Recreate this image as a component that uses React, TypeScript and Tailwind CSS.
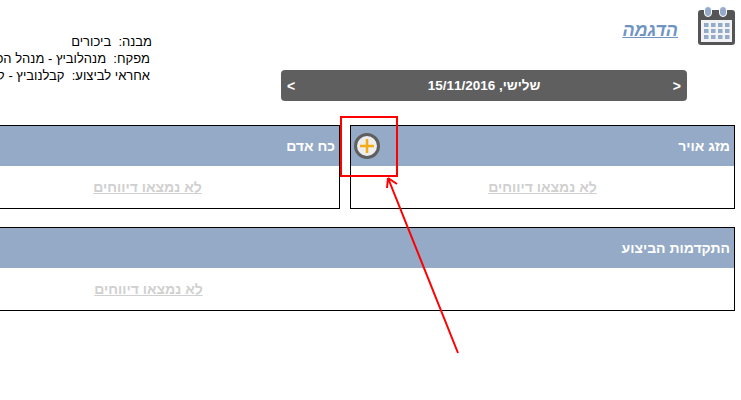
const noReports = "לא נמצאו דיווחים";

function CalendarIcon() {
  return (
    <svg width="37" height="40" viewBox="0 0 37 40" className="block">
      <rect x="0" y="4" width="37" height="35" rx="3" fill="#555" />
      <rect x="3" y="14" width="31" height="22" fill="#f1f3f6" />
      {[17, 23, 29].map((y) =>
        [6, 13, 20, 27].map((x) => <rect key={`${x}-${y}`} x={x} y={y} width="4.5" height="4" fill="#94aac6" />)
      )}
      <rect x="6.5" y="0.5" width="7" height="10" rx="3.5" fill="#94aac6" stroke="#fff" />
      <rect x="21.5" y="0.5" width="7" height="10" rx="3.5" fill="#94aac6" stroke="#fff" />
    </svg>
  );
}

function PlusIcon() {
  return (
    <svg width="26" height="26" viewBox="0 0 26 26" className="block">
      <circle cx="13" cy="13" r="11.5" fill="#eeeeee" stroke="#5f5f5f" strokeWidth="3" />
      <path d="M13 6v14M6 13h14" stroke="#f5ac14" strokeWidth="2.5" />
    </svg>
  );
}

function Panel({ title, action, className }: { title: string; action?: boolean; className: string }) {
  return (
    <div className={`border border-black ${className}`}>
      <div className="h-10 bg-[#94aac6] flex items-center justify-between pr-[4px] pl-[3px]">
        <span className="text-white font-bold text-sm">{title}</span>
        {action && <PlusIcon />}
      </div>
      <div className="h-[42px] flex items-center justify-center">
        <a className="text-[#d0d0d0] font-bold text-sm underline">{noReports}</a>
      </div>
    </div>
  );
}

export default function App() {
  return (
    <div
      dir="rtl"
      className="relative w-[741px] h-[400px] overflow-hidden bg-white text-sm text-black font-['Liberation_Sans',Arial,sans-serif]"
    >
      <div className="w-[780px] ml-[-45px] mr-[6px] pt-[6px]">
        <div className="flex h-[119px]">
          <div className="w-[36px] shrink-0">
            <CalendarIcon />
          </div>
          <div className="w-[418px] shrink-0 pr-[12px]">
            <a className="block mt-[10px] pr-[9px] text-[#6f94c4] text-lg font-bold italic underline">הדגמה</a>
            <div className="mt-[26px] h-[31px] w-[406px] rounded bg-[#5f5f5f] text-white font-bold flex items-center justify-between px-[6px]">
              <span>&lt;</span>
              <span className="text-[13.5px]">שלישי, 15/11/2016</span>
              <span>&gt;</span>
            </div>
          </div>
          <div className="mr-[131px] pt-[27px] leading-[17px] whitespace-nowrap text-[13px]">
            <div className="mr-[-2px] mb-[1px]">מבנה:&nbsp; ביכורים</div>
            <div className="leading-[16px]">מפקח:&nbsp; מנהלוביץ - מנהל הפרויקט</div>
            <div>אחראי לביצוע:&nbsp; קבלנוביץ - קבלן</div>
          </div>
        </div>
        <div className="flex gap-[10px]">
          <Panel title="מזג אויר" action className="w-[385px]" />
          <Panel title="כח אדם" className="w-[385px]" />
        </div>
        <div className="mt-[18px] border border-black">
          <div className="h-10 bg-[#94aac6] flex items-center pr-[4px]">
            <span className="text-white font-bold text-sm">התקדמות הביצוע</span>
          </div>
          <div className="h-[42px] flex">
            <div className="flex-1" />
            <div className="w-[385px] flex items-center justify-center">
              <a className="text-[#d0d0d0] font-bold text-sm underline">{noReports}</a>
            </div>
          </div>
        </div>
      </div>
      {/* annotation drawn over the page */}
      <div className="absolute left-[340px] top-[116px] w-[58px] h-[61px] border-2 border-[#fe0000]" />
      <svg className="absolute left-[380px] top-[170px]" width="90" height="190" viewBox="0 0 90 190">
        <path d="M78 183L8 8M8 8L7 18M8 8L17 14" fill="none" stroke="#fe0000" strokeWidth="2" />
      </svg>
    </div>
  );
}
